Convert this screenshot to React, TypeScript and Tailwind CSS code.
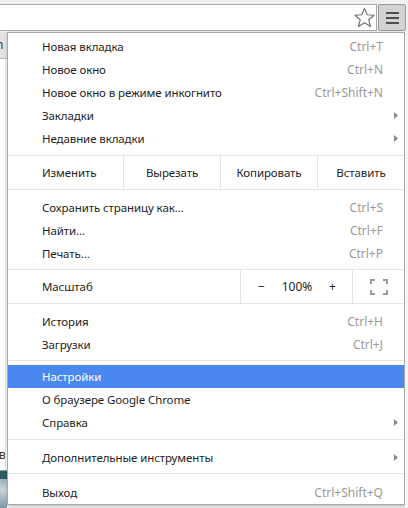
import React from "react";

function Arrow() {
  return (
    <svg width="4" height="7" viewBox="0 0 4 7" className="block">
      <polygon points="0,0 4,3.5 0,7" fill="#8a8a8a" />
    </svg>
  );
}

function Row({
  label,
  shortcut,
  arrow,
  active,
}: {
  label: string;
  shortcut?: string;
  arrow?: boolean;
  active?: boolean;
}) {
  return (
    <div
      className={
        active
          ? "flex h-[23px] items-center bg-[#4a87ee] pl-[34px] pr-[6px] text-white"
          : "flex h-[23px] items-center pl-[34px] pr-[6px] text-[#1e1e1e]"
      }
    >
      <span className="flex-1 whitespace-nowrap tracking-[-0.1px]">{label}</span>
      {shortcut ? <span className="whitespace-nowrap text-[12px] text-[#9a9a9a]">{shortcut}</span> : null}
      <span className="flex w-[15px] justify-end">{arrow ? <Arrow /> : null}</span>
    </div>
  );
}

function Star() {
  return (
    <svg width="21" height="21" viewBox="0 0 20 20" className="block">
      <polygon
        points="10,1.3 12.6,7.4 19.1,7.9 14.1,12.2 15.7,18.6 10,15.1 4.3,18.6 5.9,12.2 0.9,7.9 7.4,7.4"
        fill="none"
        stroke="#707070"
        strokeWidth="1.1"
        strokeLinejoin="round"
      />
    </svg>
  );
}

function Fullscreen() {
  return (
    <svg width="18" height="16" viewBox="0 0 18 16" className="block">
      <g stroke="#9a9a9a" strokeWidth="2" fill="none">
        <polyline points="1,5 1,1 5,1" />
        <polyline points="13,1 17,1 17,5" />
        <polyline points="17,11 17,15 13,15" />
        <polyline points="5,15 1,15 1,11" />
      </g>
    </svg>
  );
}

export default function App() {
  return (
    <div className="flex h-[508px] w-[408px] flex-col overflow-hidden bg-white font-['Noto_Sans','Open_Sans',sans-serif] text-[12px] leading-none">
      {/* toolbar */}
      <div className="flex h-[32px] shrink-0 bg-[#f1f1f1] pt-[4px]">
        <div className="flex h-[27px] flex-1 items-center justify-end border-y border-r border-[#a9a9a9] bg-white pr-[1px]">
          <Star />
        </div>
        <div className="ml-[1px] mr-[2px] flex h-[27px] w-[28px] flex-col items-center justify-center gap-[3px] rounded-[2px] border border-[#999] bg-[#d2d2d2]">
          <div className="h-[2px] w-[13px] bg-[#4d4d4d]" />
          <div className="h-[2px] w-[13px] bg-[#4d4d4d]" />
          <div className="h-[2px] w-[13px] bg-[#4d4d4d]" />
        </div>
      </div>

      <div className="flex flex-1 items-start">
        {/* left page strip */}
        <div className="flex h-[476px] w-[7px] shrink-0 flex-col overflow-hidden">
          <div className="flex h-[27px] items-center overflow-hidden border-b border-[#bdbdbd] bg-[#e2e2e2] text-[#333]">
            <span className="ml-[-4px]">n</span>
          </div>
          <div className="mr-[1px] flex flex-1 flex-col border-r border-[#e3e3e3] bg-white">
            <div className="flex-1" />
            <div className="flex h-[16px] items-center overflow-hidden text-[#333]">
              <span className="ml-[-1px]">в</span>
            </div>
            <div className="h-[7px]" />
          </div>
          <div className="h-px bg-[#9a9a9a]" />
          <div className="h-[8px] bg-[#2c5c66]" />
          <div className="h-[29px] bg-[linear-gradient(180deg,#9fb2bd,#c9d3da_40%,#7e97a6)]" />
        </div>

        {/* menu */}
        <div className="w-[398px] shrink-0 border border-[#a8a8a8] bg-white pt-[2px] text-[11.5px] shadow-[1px_2px_4px_rgba(0,0,0,0.25)]">
          <Row label="Новая вкладка" shortcut="Ctrl+T" />
          <Row label="Новое окно" shortcut="Ctrl+N" />
          <Row label="Новое окно в режиме инкогнито" shortcut="Ctrl+Shift+N" />
          <Row label="Закладки" arrow />
          <Row label="Недавние вкладки" arrow />

          <div className="mb-[6px] mt-[5px] flex h-[35px] items-stretch border-y border-[#e4e4e4] tracking-[-0.1px] text-[#1e1e1e]">
            <div className="flex w-[115px] items-center pl-[34px]">Изменить</div>
            <div className="flex w-[97px] items-center justify-center border-l border-[#e4e4e4]">Вырезать</div>
            <div className="flex w-[97px] items-center justify-center border-l border-[#e4e4e4]">Копировать</div>
            <div className="flex flex-1 items-center justify-center border-l border-[#e4e4e4]">Вставить</div>
          </div>

          <Row label="Сохранить страницу как..." shortcut="Ctrl+S" />
          <Row label="Найти..." shortcut="Ctrl+F" />
          <Row label="Печать..." shortcut="Ctrl+P" />

          <div className="mb-[6px] mt-[4px] flex h-[35px] items-stretch border-y border-[#e4e4e4] text-[#1e1e1e]">
            <div className="flex flex-1 items-center pl-[34px] tracking-[-0.1px]">Масштаб</div>
            <div className="flex w-[112px] items-center justify-between border-l border-[#e4e4e4] pl-[17px] pr-[16px] text-[12px]">
              <span>−</span>
              <span>100%</span>
              <span>+</span>
            </div>
            <div className="flex w-[52px] items-center justify-center border-l border-[#e4e4e4]">
              <Fullscreen />
            </div>
          </div>

          <Row label="История" shortcut="Ctrl+H" />
          <Row label="Загрузки" shortcut="Ctrl+J" />

          <div className="mb-[4px] mt-[4px] h-px bg-[#e4e4e4]" />

          <Row label="Настройки" active />
          <Row label="О браузере Google Chrome" />
          <Row label="Справка" arrow />

          <div className="mb-[6px] mt-[5px] h-px bg-[#e4e4e4]" />

          <Row label="Дополнительные инструменты" arrow />

          <div className="mb-[7px] mt-[4px] h-px bg-[#e4e4e4]" />

          <Row label="Выход" shortcut="Ctrl+Shift+Q" />
        </div>
        <div className="h-[476px] flex-1 bg-[#f4f4f4]" />
      </div>
    </div>
  );
}
